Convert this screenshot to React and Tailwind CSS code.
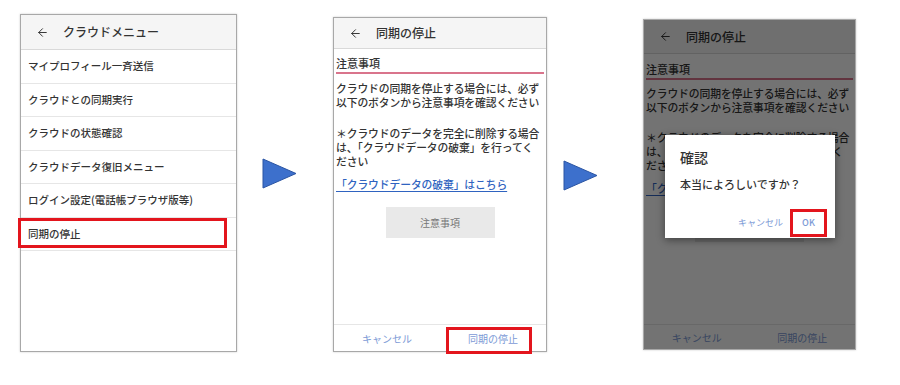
import React from 'react';
import { ArrowLeft } from 'lucide-react';

const menuItems = [
  'マイプロフィール一斉送信',
  'クラウドとの同期実行',
  'クラウドの状態確認',
  'クラウドデータ復旧メニュー',
  'ログイン設定(電話帳ブラウザ版等)',
  '同期の停止',
];

const Header = ({ title, className }) => (
  <div className={`flex items-center bg-[#f5f5f5] border-b border-[#d9d9d9] pl-[15px] ${className}`}>
    <ArrowLeft size={13} strokeWidth={1.8} className="text-[#333]" />
    <span className="ml-[14px] text-[12px] font-medium text-[#333]">{title}</span>
  </div>
);

const Arrow = ({ className }) => (
  <svg width="36" height="31" viewBox="0 0 36 31" className={className}>
    <polygon points="1,1 34,15.5 1,30" fill="#3d70cc" stroke="#2b55a3" strokeWidth="1" />
  </svg>
);

const MenuPanel = () => (
  <div className="ml-[20px] mt-[14px] flex h-[338px] w-[217px] flex-col border border-[#a8a8a8] bg-white shadow-[0_0_2px_rgba(0,0,0,0.2)]">
    <Header title="クラウドメニュー" className="h-[35px] shrink-0" />
    {menuItems.map((item, i) => (
      <div
        key={item}
        className="relative flex h-[33.5px] shrink-0 items-center border-b border-[#e6e6e6] pl-[7px] text-[10.5px] font-medium text-[#333]"
      >
        {item}
        {i === menuItems.length - 1 && (
          <div className="absolute left-[-3px] top-0 h-[30px] w-[209px] border-[3px] border-[#e3151d]" />
        )}
      </div>
    ))}
  </div>
);

const StopPanel = ({ className, headerH, labelPt, p1mt, p2mt, barH, highlight, muted }) => (
  <div className={`relative flex flex-col border border-[#a8a8a8] bg-white shadow-[0_0_2px_rgba(0,0,0,0.2)] ${className}`}>
    <Header title="同期の停止" className={`${headerH} shrink-0`} />
    <div className={`mx-[2px] border-b-2 border-[#d9748c] pb-[3px] ${labelPt} text-[11px] leading-[12px] font-medium text-[#333]`}>
      注意事項
    </div>
    <div className="whitespace-nowrap px-[2px] text-[10.8px] leading-[14px] font-medium tracking-[-0.1px] text-[#333]">
      <p className={p1mt}>
        クラウドの同期を停止する場合には、必ず
        <br />
        以下のボタンから注意事項を確認ください
      </p>
      <p className={p2mt}>
        ＊クラウドのデータを完全に削除する場合
        <br />
        は、「クラウドデータの破棄」を行ってく
        <br />
        ださい
      </p>
      <p className="mt-[9px] text-[#2f63c0] underline underline-offset-2">「クラウドデータの破棄」はこちら</p>
    </div>
    <div className="mt-[16px] flex justify-center">
      <div className="flex h-[31px] w-[109px] items-center justify-center bg-[#e9e9e9] text-[10px] text-[#777]">
        注意事項
      </div>
    </div>
    <div className="flex-1" />
    <div className={`grid ${barH} grid-cols-2 border-t border-[#e6e6e6] text-[10px] text-[#7c9ad6]`}>
      <div className="flex items-center justify-center">キャンセル</div>
      <div className="relative flex items-center justify-center">
        同期の停止
        {highlight && (
          <div className="absolute left-[6px] top-[2px] h-[27px] w-[86px] border-[3px] border-[#e3151d]" />
        )}
      </div>
    </div>
    {muted && (
      <>
        <div className="absolute inset-0 bg-black/55" />
        <div className="absolute left-[21px] top-[115px] flex w-[170px] flex-col bg-white shadow-[0_2px_8px_rgba(0,0,0,0.45)]">
          <div className="pl-[15px] pt-[15px] text-[14px] leading-[14px] font-medium text-[#333]">確認</div>
          <div className="mt-[14px] pl-[15px] text-[11px] leading-[12px] font-medium text-[#333]">本当によろしいですか？</div>
          <div className="mb-[1px] mt-[19px] flex h-[28px] items-center justify-end pr-[8px] text-[9px] text-[#7c9ad6]">
            <span>キャンセル</span>
            <div className="ml-[7px] flex h-[28px] w-[37px] items-center justify-center border-[3px] border-[#e3151d] font-medium">
              OK
            </div>
          </div>
        </div>
      </>
    )}
  </div>
);

export default function App() {
  return (
    <div className="flex h-[385px] w-[900px] items-start bg-white font-['Noto_Sans_CJK_JP','Noto_Sans',sans-serif]">
      <MenuPanel />
      <Arrow className="ml-[25px] mt-[158px] shrink-0" />
      <StopPanel
        className="ml-[35px] mt-[17px] h-[335px] w-[214px] shrink-0"
        headerH="h-[31px]"
        labelPt="pt-[8px]"
        p1mt="mt-[7px]"
        p2mt="mt-[17px]"
        barH="h-[27px]"
        highlight
      />
      <Arrow className="ml-[16px] mt-[160px] shrink-0" />
      <StopPanel
        className="ml-[44px] mt-[19px] h-[331px] w-[213px] shrink-0"
        headerH="h-[34px]"
        labelPt="pt-[9px]"
        p1mt="mt-[6px]"
        p2mt="mt-[16px]"
        barH="h-[25px]"
        muted
      />
    </div>
  );
}
